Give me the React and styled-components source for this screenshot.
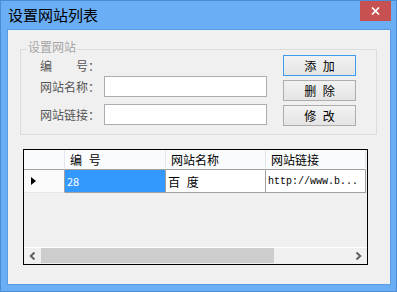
import React from 'react';
import styled, { createGlobalStyle } from 'styled-components';

const GlobalStyle = createGlobalStyle`
  body {
    margin: 0;
    overflow: hidden;
    font-family: "Noto Sans CJK SC", "Liberation Sans", sans-serif;
  }
`;

const Window = styled.div`
  width: 397px;
  height: 292px;
  box-sizing: border-box;
  background: #6aaef5;
  border: 1px solid #4c8cd4;
  display: flex;
  flex-direction: column;
`;

const TitleBar = styled.div`
  height: 28px;
  display: flex;
  align-items: flex-start;
  justify-content: space-between;
`;

const Title = styled.div`
  padding-left: 7px;
  line-height: 27px;
  font-size: 15px;
  color: #000;
`;

const CloseButton = styled.div`
  width: 31px;
  height: 20px;
  margin-right: 5px;
  background: #c75050;
  display: flex;
  align-items: center;
  justify-content: center;
`;

const Client = styled.div`
  flex: 1;
  margin: 0 5px 6px 6px;
  border: 1px solid #5a9be3;
  background: #f0f0f0;
  padding: 19px 0 0 12px;
  display: flex;
  flex-direction: column;
`;

const GroupBox = styled.div`
  position: relative;
  width: 357px;
  height: 86px;
  box-sizing: border-box;
  border: 1px solid #dcdcdc;
  padding: 5px 0 0 19px;
  display: flex;
  gap: 16px;
`;

const Legend = styled.span`
  position: absolute;
  top: -9px;
  left: 6px;
  padding: 0 1px;
  background: #f0f0f0;
  font-size: 12px;
  line-height: 12px;
  color: #a5a5a5;
`;

const FormColumn = styled.div`
  display: flex;
  flex-direction: column;
`;

const FieldRow = styled.div`
  display: flex;
  align-items: center;
  height: 21px;
  margin-top: ${(p) => p.$mt || 0}px;
`;

const Label = styled.span`
  width: 64px;
  font-size: 12px;
  color: #555;
  white-space: pre;
`;

const TextBox = styled.input`
  width: 163px;
  height: 21px;
  box-sizing: border-box;
  border: 1px solid #abadb3;
  background: #fff;
  margin: 0;
  padding: 0 2px;
  outline: none;
`;

const ButtonColumn = styled.div`
  display: flex;
  flex-direction: column;
  gap: 4px;
`;

const Button = styled.button`
  width: 73px;
  height: 21px;
  box-sizing: border-box;
  padding: 0;
  border: 1px solid ${(p) => (p.$focused ? '#3c9cf0' : '#adadad')};
  background: linear-gradient(#f2f2f2, #e4e4e4);
  font-family: "Noto Sans CJK SC", sans-serif;
  font-size: 12px;
  word-spacing: 4px;
  color: #000;
`;

const DataGrid = styled.div`
  width: 345px;
  height: 116px;
  margin: 14px 0 0 3px;
  box-sizing: border-box;
  border: 1px solid #000;
  background: #f0f0f0;
  display: flex;
  flex-direction: column;
`;

const GridRow = styled.div`
  display: grid;
  grid-template-columns: 41px 101px 100px 100px;
  height: ${(p) => p.$h}px;
  box-sizing: border-box;
`;

const HeaderCell = styled.div`
  background: #fafbfd;
  border-right: 1px solid #e3e7ed;
  border-bottom: 1px solid #a0a0a0;
  padding-left: 5px;
  font-size: 12px;
  line-height: 19px;
  word-spacing: 4px;
  color: #000;
  white-space: nowrap;
`;

const RowHeader = styled.div`
  background: #fafafa;
  border-right: 1px solid #a0a0a0;
  border-bottom: 1px solid #e6e6e6;
  padding-left: 7px;
  display: flex;
  align-items: center;
`;

const DataCell = styled.div`
  background: ${(p) => (p.$selected ? '#3399ff' : '#fff')};
  color: ${(p) => (p.$selected ? '#fff' : '#000')};
  border-right: 1px solid #a0a0a0;
  border-bottom: 1px solid #a0a0a0;
  padding-left: 2px;
  display: flex;
  align-items: center;
  font-family: ${(p) => (p.$mono ? '"Liberation Mono", monospace' : '"Noto Sans CJK SC", sans-serif')};
  font-size: ${(p) => (p.$small ? 11 : p.$mono ? 10 : 12)}px;
  word-spacing: 4px;
  white-space: nowrap;
  overflow: hidden;
`;

const Filler = styled.div`
  flex: 1;
`;

const ScrollBar = styled.div`
  height: 17px;
  box-sizing: border-box;
  border-top: 1px solid #fff;
  display: flex;
  align-items: flex-start;
`;

const ScrollArrow = styled.div`
  width: 17px;
  height: 16px;
  display: flex;
  align-items: center;
  justify-content: center;
`;

const Thumb = styled.div`
  width: 233px;
  height: 15px;
  background: #cdcdcd;
`;

const Track = styled.div`
  flex: 1;
`;

const Chevron = ({ dir }) => (
  <svg width="7" height="8" viewBox="0 0 7 8">
    <polyline
      points={dir === 'left' ? '5.5,0.5 1.8,4 5.5,7.5' : '1.5,0.5 5.2,4 1.5,7.5'}
      fill="none"
      stroke="#606060"
      strokeWidth="2"
    />
  </svg>
);

const App = () => (
  <>
    <GlobalStyle />
    <Window>
      <TitleBar>
        <Title>设置网站列表</Title>
        <CloseButton>
          <svg width="9" height="8" viewBox="0 0 9 8">
            <path d="M1 0.5 L8 7.5 M8 0.5 L1 7.5" stroke="#fff" strokeWidth="1.7" />
          </svg>
        </CloseButton>
      </TitleBar>
      <Client>
        <GroupBox>
          <Legend>设置网站</Legend>
          <FormColumn>
            <FieldRow>
              <Label>编　　号：</Label>
            </FieldRow>
            <FieldRow>
              <Label>网站名称：</Label>
              <TextBox />
            </FieldRow>
            <FieldRow $mt={7}>
              <Label>网站链接：</Label>
              <TextBox />
            </FieldRow>
          </FormColumn>
          <ButtonColumn>
            <Button $focused>添 加</Button>
            <Button>删 除</Button>
            <Button>修 改</Button>
          </ButtonColumn>
        </GroupBox>
        <DataGrid>
          <GridRow $h={20}>
            <HeaderCell />
            <HeaderCell>编 号</HeaderCell>
            <HeaderCell>网站名称</HeaderCell>
            <HeaderCell>网站链接</HeaderCell>
          </GridRow>
          <GridRow $h={23}>
            <RowHeader>
              <svg width="5" height="8" viewBox="0 0 5 8">
                <polygon points="0,0 5,4 0,8" fill="#000" />
              </svg>
            </RowHeader>
            <DataCell $selected $small>28</DataCell>
            <DataCell>百 度</DataCell>
            <DataCell $mono>http://www.b...</DataCell>
          </GridRow>
          <Filler />
          <ScrollBar>
            <ScrollArrow>
              <Chevron dir="left" />
            </ScrollArrow>
            <Thumb />
            <Track />
            <ScrollArrow>
              <Chevron dir="right" />
            </ScrollArrow>
          </ScrollBar>
        </DataGrid>
      </Client>
    </Window>
  </>
);

export default App;
